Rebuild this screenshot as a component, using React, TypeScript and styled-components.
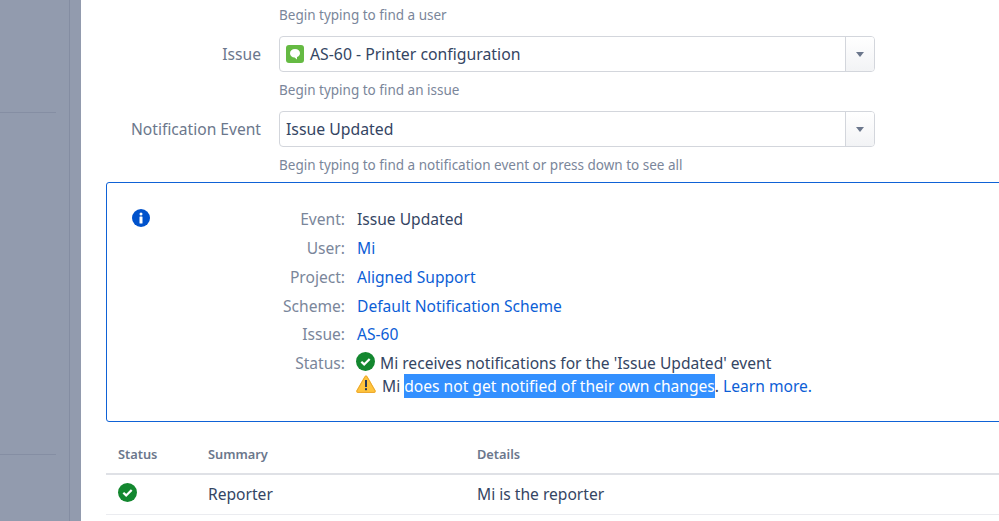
import React from 'react';
import styled, { createGlobalStyle } from 'styled-components';

const GlobalStyle = createGlobalStyle`
html, body { margin: 0; padding: 0; background: #fff; }
body { font-family: 'Noto Sans', 'Open Sans', sans-serif; color: #344563; overflow: hidden; }
`;

const Page = styled.div`
display: flex;
width: 999px;
height: 521px;
overflow: hidden;
`;

const Sidebar = styled.div`
flex: 0 0 81px;
box-sizing: border-box;
height: 521px;
background: #929bae;
display: flex;
`;

const SidebarInner = styled.div`
flex: 0 0 69px;
border-right: 1px solid #848da2;
padding-top: 112px;
`;

const SidebarLine = styled.div<{ $gap: number }>`
width: 56px;
height: 1px;
background: #858ea3;
margin-bottom: ${p => p.$gap}px;
`;

const Main = styled.div`
flex: 1;
min-width: 0;
padding-top: 6px;
padding-left: 25px;
`;

const Hint = styled.div`
margin-left: 173px;
font-size: 13.5px;
line-height: 18px;
color: #7a869a;
`;

const FormRow = styled.div`
display: flex;
align-items: center;
margin-top: 12px;
margin-bottom: 9px;
`;

const FieldLabel = styled.label`
width: 155px;
text-align: right;
font-size: 15.6px;
line-height: 34px;
color: #6b778c;
margin-right: 18px;
`;

const Select = styled.div`
box-sizing: border-box;
width: 596px;
height: 36px;
display: flex;
border: 1px solid #d3d6dc;
border-radius: 4px;
overflow: hidden;
`;

const SelectValue = styled.div`
flex: 1;
display: flex;
align-items: center;
gap: 6px;
padding-left: 6px;
font-size: 15.8px;
color: #344563;
`;

const SelectButton = styled.div`
flex: 0 0 28px;
display: flex;
align-items: center;
justify-content: center;
border-left: 1px solid #d3d6dc;
background: linear-gradient(#ffffff, #f2f3f5);
`;

const Caret = styled.div`
width: 0;
height: 0;
border-left: 4.5px solid transparent;
border-right: 4.5px solid transparent;
border-top: 5px solid #6b778c;
`;

const InfoBox = styled.div`
box-sizing: border-box;
width: 920px;
height: 240px;
margin-top: 8px;
border: 1px solid #0f62d6;
border-radius: 3px;
display: flex;
padding: 22px 0 0 25px;
`;

const InfoIconSlot = styled.div`
flex: 0 0 18px;
height: 18px;
margin-top: 4px;
`;

const InfoGrid = styled.div`
display: grid;
grid-template-columns: 195px auto;
grid-auto-rows: 28.85px;
column-gap: 12px;
font-size: 15.6px;
line-height: 28px;
`;

const InfoKey = styled.div`
text-align: right;
color: #7a869a;
`;

const InfoValue = styled.div`
color: #344563;
`;

const InfoLink = styled.a`
color: #0c5ed6;
text-decoration: none;
`;

const StatusLines = styled.div`
padding-top: 3px;
margin-left: -1px;
`;

const StatusLine = styled.div`
display: flex;
align-items: flex-start;
gap: 5px;
height: 23px;
line-height: 23px;
white-space: nowrap;
`;

const WarningSlot = styled.span`
display: flex;
flex: 0 0 20px;
margin-right: 1px;
`;

const Selected = styled.span`
background: #3390ff;
color: #fff;
padding: 1px 0;
`;

const Table = styled.div`
width: 920px;
margin-top: 18px;
`;

const TableRow = styled.div<{ $head?: boolean }>`
display: grid;
grid-template-columns: 90px 269px 1fr;
align-items: center;
box-sizing: border-box;
height: ${p => (p.$head ? 35 : 40)}px;
padding-left: 12px;
padding-bottom: ${p => (p.$head ? 6 : 1)}px;
border-bottom: ${p => (p.$head ? 2 : 1)}px solid ${p => (p.$head ? '#dfe1e6' : '#ebecf0')};
font-size: ${p => (p.$head ? 12.8 : 15.6)}px;
font-weight: ${p => (p.$head ? 600 : 400)};
color: ${p => (p.$head ? '#6b778c' : '#344563')};
`;

const RowStatus = styled.span`
display: flex;
margin-bottom: 4px;
`;

function CheckIcon({ size }: { size: number }) {
  return (
    <svg width={size} height={size} viewBox="0 0 20 20">
      <circle cx="10" cy="10" r="10" fill="#13872f" />
      <path d="M5.6 10.3l3 2.8 5.8-5.800" fill="none" stroke="#fff" strokeWidth="2.4" />
    </svg>
  );
}

function WarningIcon() {
  return (
    <svg width="20" height="18" viewBox="0 0 20 18">
      <path d="M8.6 1.2c.6-1.100 2.200-1.100 2.800 0l8.200 14.300c.6 1.100-.2 2.400-1.400 2.400H1.800C.6 17.900-.2 16.600.4 15.500z" fill="#ffc43d" />
      <path d="M9 1.700c.4-.7 1.600-.7 2 0l8 14c.4.8-.1 1.700-1 1.700H2c-.9 0-1.400-.9-1-1.700z" fill="none" stroke="#eaa630" strokeWidth="1" />
      <rect x="9" y="5" width="2" height="7" fill="#253858" />
      <rect x="9" y="13.200" width="2" height="2" fill="#253858" />
    </svg>
  );
}

function InfoIcon() {
  return (
    <svg width="18" height="18" viewBox="0 0 18 18">
      <circle cx="9" cy="9" r="9" fill="#0052cc" />
      <rect x="7.500" y="3.500" width="3" height="3" rx="1.500" fill="#fff" />
      <rect x="7.500" y="7.500" width="3" height="7" rx="0.500" fill="#fff" />
    </svg>
  );
}

function IssueTypeIcon() {
  return (
    <svg width="18" height="18" viewBox="0 0 18 18">
      <rect width="18" height="18" rx="3" fill="#65ba43" />
      <path d="M9 4c-3 0-5 1.800-5 4.300 0 2.400 2 4.200 4.600 4.200l2.400 2v-2.400c1.800-.6 3-2.100 3-3.800C14 5.800 12 4 9 4z" fill="#fff" />
    </svg>
  );
}

export default function App() {
  return (
    <Page>
      <GlobalStyle />
      <Sidebar>
        <SidebarInner>
          <SidebarLine $gap={341} />
          <SidebarLine $gap={0} />
        </SidebarInner>
      </Sidebar>
      <Main>
        <Hint>Begin typing to find a user</Hint>
        <FormRow>
          <FieldLabel>Issue</FieldLabel>
          <Select>
            <SelectValue><IssueTypeIcon />AS-60 - Printer configuration</SelectValue>
            <SelectButton><Caret /></SelectButton>
          </Select>
        </FormRow>
        <Hint>Begin typing to find an issue</Hint>
        <FormRow>
          <FieldLabel>Notification Event</FieldLabel>
          <Select>
            <SelectValue>Issue Updated</SelectValue>
            <SelectButton><Caret /></SelectButton>
          </Select>
        </FormRow>
        <Hint>Begin typing to find a notification event or press down to see all</Hint>
        <InfoBox>
          <InfoIconSlot><InfoIcon /></InfoIconSlot>
          <InfoGrid>
            <InfoKey>Event:</InfoKey>
            <InfoValue>Issue Updated</InfoValue>
            <InfoKey>User:</InfoKey>
            <InfoValue><InfoLink>Mi</InfoLink></InfoValue>
            <InfoKey>Project:</InfoKey>
            <InfoValue><InfoLink>Aligned Support</InfoLink></InfoValue>
            <InfoKey>Scheme:</InfoKey>
            <InfoValue><InfoLink>Default Notification Scheme</InfoLink></InfoValue>
            <InfoKey>Issue:</InfoKey>
            <InfoValue><InfoLink>AS-60</InfoLink></InfoValue>
            <InfoKey>Status:</InfoKey>
            <InfoValue>
              <StatusLines>
                <StatusLine><CheckIcon size={19} />Mi receives notifications for the 'Issue Updated' event</StatusLine>
                <StatusLine><WarningSlot><WarningIcon /></WarningSlot><span>Mi <Selected>does not get notified of their own changes</Selected>. <InfoLink>Learn more.</InfoLink></span></StatusLine>
              </StatusLines>
            </InfoValue>
          </InfoGrid>
        </InfoBox>
        <Table>
          <TableRow $head><span>Status</span><span>Summary</span><span>Details</span></TableRow>
          <TableRow><RowStatus><CheckIcon size={19} /></RowStatus><span>Reporter</span><span>Mi is the reporter</span></TableRow>
        </Table>
      </Main>
    </Page>
  );
}
